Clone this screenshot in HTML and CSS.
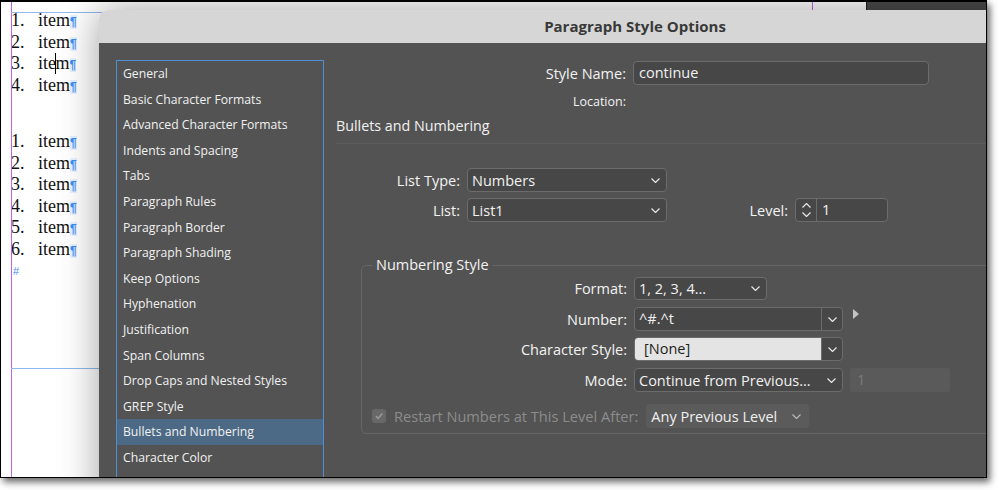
FILE: index.html
```html
<!DOCTYPE html>
<html>
<head>
<meta charset="utf-8">
<link rel="stylesheet" href="styles.css">
</head>
<body>
<div class="frame">
  <div class="guide guide-left"></div>
  <div class="guide guide-right"></div>
  <div class="frame-edge edge-top"></div>
  <div class="frame-edge edge-bottom"></div>
  <div class="panel-top"></div>

  <div class="story">
    <div class="block">
      <div class="line"><span class="num">1.</span>item<span class="pil">¶</span></div>
      <div class="line"><span class="num">2.</span>item<span class="pil">¶</span></div>
      <div class="line"><span class="num">3.</span>ite<span class="caret"></span>m<span class="pil">¶</span></div>
      <div class="line"><span class="num">4.</span>item<span class="pil">¶</span></div>
    </div>
    <div class="block block-two">
      <div class="line"><span class="num">1.</span>item<span class="pil">¶</span></div>
      <div class="line"><span class="num">2.</span>item<span class="pil">¶</span></div>
      <div class="line"><span class="num">3.</span>item<span class="pil">¶</span></div>
      <div class="line"><span class="num">4.</span>item<span class="pil">¶</span></div>
      <div class="line"><span class="num">5.</span>item<span class="pil">¶</span></div>
      <div class="line"><span class="num">6.</span>item<span class="pil">¶</span></div>
      <div class="line"><span class="eos">#</span></div>
    </div>
  </div>

  <div class="dialog">
    <div class="titlebar">Paragraph Style Options</div>
    <div class="dbody">
      <ul class="cats">
        <li>General</li>
        <li>Basic Character Formats</li>
        <li>Advanced Character Formats</li>
        <li>Indents and Spacing</li>
        <li>Tabs</li>
        <li>Paragraph Rules</li>
        <li>Paragraph Border</li>
        <li>Paragraph Shading</li>
        <li>Keep Options</li>
        <li>Hyphenation</li>
        <li>Justification</li>
        <li>Span Columns</li>
        <li>Drop Caps and Nested Styles</li>
        <li>GREP Style</li>
        <li class="sel">Bullets and Numbering</li>
        <li>Character Color</li>
      </ul>

      <div class="pane">
        <div class="row row-name">
          <label class="lbl lbl-name">Style Name:</label>
          <div class="field name-field">continue</div>
        </div>
        <div class="row row-loc">
          <label class="lbl lbl-name small">Location:</label>
        </div>
        <div class="section-head">Bullets and Numbering</div>

        <div class="row row-type">
          <label class="lbl lbl-list">List Type:</label>
          <div class="select sel-list"><span>Numbers</span><svg class="chev" viewBox="0 0 9 5"><polyline points="0.5,0.5 4.5,4.5 8.5,0.5"/></svg></div>
        </div>
        <div class="row row-list">
          <label class="lbl lbl-list">List:</label>
          <div class="select sel-list"><span>List1</span><svg class="chev" viewBox="0 0 9 5"><polyline points="0.5,0.5 4.5,4.5 8.5,0.5"/></svg></div>
          <label class="lbl lbl-level">Level:</label>
          <div class="spinner">
            <div class="spin-btn">
              <svg viewBox="0 0 9 5"><polyline points="0.5,4.5 4.5,0.5 8.5,4.5"/></svg>
              <svg viewBox="0 0 9 5"><polyline points="0.5,0.5 4.5,4.5 8.5,0.5"/></svg>
            </div>
            <span class="spin-val">1</span>
          </div>
        </div>

        <fieldset class="group">
          <legend>Numbering Style</legend>
          <div class="grow grow-first">
            <label class="lbl lbl-group">Format:</label>
            <div class="select sel-format"><span>1, 2, 3, 4...</span><svg class="chev" viewBox="0 0 9 5"><polyline points="0.5,0.5 4.5,4.5 8.5,0.5"/></svg></div>
          </div>
          <div class="grow">
            <label class="lbl lbl-group">Number:</label>
            <div class="combo">
              <span class="combo-text">^#.^t</span>
              <span class="combo-btn"><svg class="chev" viewBox="0 0 9 5"><polyline points="0.5,0.5 4.5,4.5 8.5,0.5"/></svg></span>
            </div>
            <svg class="tri" viewBox="0 0 6 10"><polygon points="0,0 6,5 0,10"/></svg>
          </div>
          <div class="grow grow-tight">
            <label class="lbl lbl-group">Character Style:</label>
            <div class="combo">
              <span class="combo-text light">[None]</span>
              <span class="combo-btn"><svg class="chev" viewBox="0 0 9 5"><polyline points="0.5,0.5 4.5,4.5 8.5,0.5"/></svg></span>
            </div>
          </div>
          <div class="grow">
            <label class="lbl lbl-group">Mode:</label>
            <div class="select sel-mode"><span>Continue from Previous...</span><svg class="chev" viewBox="0 0 9 5"><polyline points="0.5,0.5 4.5,4.5 8.5,0.5"/></svg></div>
            <div class="disabled-field">1</div>
          </div>
          <div class="restart">
            <span class="check"><svg viewBox="0 0 10 10"><polyline points="2,5.2 4.2,7.4 8.2,2.4"/></svg></span>
            <span class="restart-lbl">Restart Numbers at This Level After:</span>
            <div class="select sel-any"><span>Any Previous Level</span><svg class="chev" viewBox="0 0 9 5"><polyline points="0.5,0.5 4.5,4.5 8.5,0.5"/></svg></div>
          </div>
        </fieldset>
      </div>
    </div>
  </div>
</div>
</body>
</html>
```

FILE: styles.css
```css
* { box-sizing: border-box; }

html, body {
  margin: 0;
  padding: 0;
  background: #fff;
}

body {
  width: 999px;
  height: 490px;
  overflow: hidden;
  font-family: "Open Sans", "Noto Sans", sans-serif;
}

.frame {
  position: relative;
  width: 987px;
  height: 478px;
  border: 1px solid #000;
  border-top-width: 2px;
  background: #fff;
  overflow: hidden;
  box-shadow: 3px 4px 7px rgba(0, 0, 0, 0.6);
}

/* canvas guides */
.guide {
  position: absolute;
  top: 0;
  bottom: 0;
  width: 1px;
  background: #c264ea;
}
.guide-left { left: 10px; }
.guide-right { left: 811px; }

.frame-edge {
  position: absolute;
  left: 10px;
  width: 100px;
  height: 1px;
  background: #8fb8ee;
}
.edge-top { top: 10px; }
.edge-bottom { top: 366px; }

.panel-top {
  position: absolute;
  left: 865px;
  top: 0;
  width: 130px;
  height: 8px;
  background: #4b4b4b;
  border-left: 1px solid #1e1e1e;
}

/* story text */
.story {
  padding: 8px 0 0 10px;
  font-family: "Liberation Serif", "Times New Roman", serif;
  font-size: 18px;
  line-height: 21.6px;
  color: #111;
}

.block-two { margin-top: 34.6px; }

.line { height: 21.6px; white-space: nowrap; }

.num {
  display: inline-block;
  width: 27px;
}

.pil {
  font-family: "Liberation Sans", sans-serif;
  font-weight: bold;
  font-size: 12px;
  color: #3b8cf3;
  background: rgba(120, 170, 255, 0.18);
}

.caret {
  display: inline-block;
  width: 0;
  height: 21px;
  border-left: 1.5px solid #000;
  vertical-align: top;
  margin: 0 -0.75px;
}

.eos {
  display: inline-block;
  margin-left: 2px;
  font-family: "Liberation Sans", sans-serif;
  font-size: 11px;
  color: #4b8ff0;
  vertical-align: top;
  line-height: 21px;
}

/* dialog window */
.dialog {
  position: absolute;
  left: 98px;
  top: 8px;
  width: 1072px;
  height: 500px;
  border-radius: 9px 9px 0 0;
  overflow: hidden;
  box-shadow: 0 0 38px rgba(0, 0, 0, 0.38);
}

.titlebar {
  height: 33px;
  line-height: 33px;
  background: #d6d6d6;
  color: #393939;
  font-weight: 700;
  font-size: 15px;
  text-align: center;
}

.dbody {
  display: flex;
  align-items: flex-start;
  height: 467px;
  background: #535353;
  padding: 17px 0 0 17px;
  color: #f1f1f1;
}

.cats {
  list-style: none;
  margin: 0;
  padding: 0;
  width: 208px;
  height: 460px;
  flex: none;
  border: 1px solid #4e8fd4;
  font-size: 12.2px;
}

.cats li {
  height: 25.6px;
  line-height: 25.6px;
  padding-left: 6px;
  white-space: nowrap;
}

.cats li.sel { background: #4c6985; }

.pane {
  flex: 1;
  margin-left: 12px;
  padding-top: 1px;
}

.row {
  display: flex;
  align-items: center;
}

.lbl {
  flex: none;
  text-align: right;
  font-size: 14.5px;
  white-space: nowrap;
  color: #f2f2f2;
}

.lbl-name { width: 290px; margin-right: 7px; }
.lbl.small { font-size: 12.5px; }

.field {
  height: 24px;
  line-height: 22px;
  background: #474747;
  border: 1px solid #6c6c6c;
  border-radius: 4px;
  padding-left: 5px;
  font-size: 14.5px;
}

.name-field { width: 296px; }

.row-loc { margin-top: 8px; height: 16px; }

.section-head {
  margin-top: 7px;
  height: 28px;
  line-height: 20px;
  font-size: 14.3px;
  border-bottom: 1px solid #5b5b5b;
}

.row-type { margin-top: 24px; }
.row-list { margin-top: 6px; }

.lbl-list { width: 124px; margin-right: 7px; }
.lbl-level { width: 121px; margin-right: 7px; }

.select {
  flex: none;
  display: flex;
  align-items: center;
  justify-content: space-between;
  height: 24px;
  background: #474747;
  border: 1px solid #6c6c6c;
  border-radius: 4px;
  padding: 0 6px 0 4px;
  font-size: 14.5px;
  white-space: nowrap;
}

.chev {
  width: 9px;
  height: 5px;
  fill: none;
  stroke: #e6e6e6;
  stroke-width: 1.2;
}

.sel-list { width: 200px; }

.spinner {
  display: flex;
  width: 93px;
  height: 24px;
  background: #474747;
  border: 1px solid #6c6c6c;
  border-radius: 4px;
  font-size: 14.5px;
}

.spin-btn {
  width: 21px;
  border-right: 1px solid #6c6c6c;
  display: flex;
  flex-direction: column;
  align-items: center;
  justify-content: center;
  gap: 4px;
}

.spin-btn svg {
  width: 9px;
  height: 5px;
  fill: none;
  stroke: #e6e6e6;
  stroke-width: 1.2;
}

.spin-val {
  padding-left: 5px;
  line-height: 22px;
}

/* numbering style group */
.group {
  margin: 33px 0 0 25px;
  padding: 0 0 5px 0;
  border: 1px solid #666;
  border-radius: 5px;
  min-width: 0;
}

.group legend {
  margin-left: 10px;
  padding: 0 4px;
  font-size: 14.5px;
  line-height: 20px;
  color: #f2f2f2;
}

.grow {
  display: flex;
  align-items: center;
  margin-top: 7px;
}

.grow-first { margin-top: 2px; }
.grow-tight { margin-top: 6px; }

.lbl-group { width: 265px; margin-right: 7px; }

.sel-format { width: 133px; height: 23px; }

.combo {
  display: flex;
  width: 209px;
  height: 24px;
  border: 1px solid #6c6c6c;
  border-radius: 4px;
  overflow: hidden;
  background: #474747;
  font-size: 14.5px;
}

.combo-text {
  flex: 1;
  padding-left: 4px;
  line-height: 22px;
  border-right: 1px solid #6c6c6c;
}

.combo-text.light {
  background: #e4e4e4;
  color: #1e1e1e;
  padding-left: 9px;
}

.combo-btn {
  width: 20px;
  display: flex;
  align-items: center;
  justify-content: center;
}

.tri {
  width: 6px;
  height: 10px;
  margin: -10px 0 0 10px;
  fill: #c4c4c4;
}

.sel-mode { width: 209px; }

.disabled-field {
  width: 100px;
  height: 24px;
  margin-left: 7px;
  background: #5a5a5a;
  border-radius: 3px;
  color: #7c7c7c;
  font-size: 14.5px;
  line-height: 24px;
  padding-left: 7px;
}

.restart {
  display: flex;
  align-items: center;
  margin-top: 12px;
  padding-left: 10px;
}

.check {
  width: 14px;
  height: 14px;
  border-radius: 3px;
  background: #686868;
  display: flex;
  align-items: center;
  justify-content: center;
}

.check svg {
  width: 10px;
  height: 10px;
  fill: none;
  stroke: #9a9a9a;
  stroke-width: 1.6;
}

.restart-lbl {
  margin-left: 8px;
  font-size: 14.6px;
  color: #8c8c8c;
  white-space: nowrap;
}

.sel-any {
  margin-left: 8px;
  width: 163px;
  height: 24px;
  background: #5b5b5b;
  border: none;
  color: #efefef;
  padding: 0 8px 0 5px;
}

.sel-any .chev { stroke: #b8b8b8; }
```
